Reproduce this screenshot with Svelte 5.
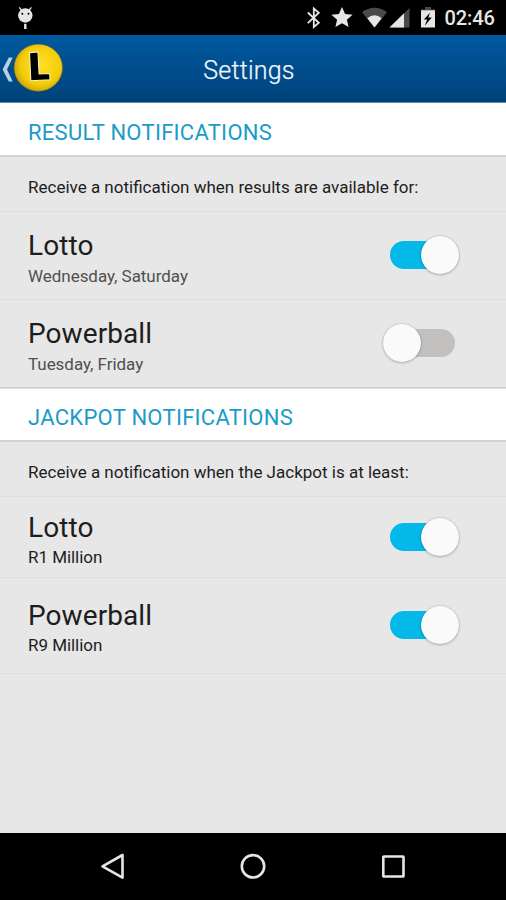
<script>
  const sections = $state([
    {
      title: 'RESULT NOTIFICATIONS',
      intro: 'Receive a notification when results are available for:',
      kind: 'result',
      rows: [
        { name: 'Lotto', detail: 'Wednesday, Saturday', on: true },
        { name: 'Powerball', detail: 'Tuesday, Friday', on: false }
      ]
    },
    {
      title: 'JACKPOT NOTIFICATIONS',
      intro: 'Receive a notification when the Jackpot is at least:',
      kind: 'jackpot',
      rows: [
        { name: 'Lotto', detail: 'R1 Million', on: true },
        { name: 'Powerball', detail: 'R9 Million', on: true }
      ]
    }
  ]);
</script>

<div class="screen">
  <div class="status">
    <svg class="debug" width="16" height="24" viewBox="0 0 16 24">
      <path d="M2.300 1.300 4.600 4.500M14.300 1.300 12 4.500" stroke="#e6e6e6" stroke-width="1.300" />
      <circle cx="8.300" cy="9.500" r="7.200" fill="#e6e6e6" />
      <path d="M8.300 17.800v5.200" stroke="#e6e6e6" stroke-width="2.400" />
      <circle cx="5.300" cy="7.700" r="1" /><circle cx="11.500" cy="7.700" r="1" />
    </svg>
    <svg class="indicators" width="130" height="24" viewBox="305 6 130 24">
      <path d="m307.800 12.500 11 10.300-5 4.200V8.500l5 4.200-11 10.500" fill="none" stroke="#e6e6e6" stroke-width="1.800" />
      <path d="m342 7 3.100 7 7.500.7-5.700 5 1.700 7.400-6.600-3.900-6.600 3.900 1.700-7.400-5.700-5 7.500-.7z" fill="#e6e6e6" />
      <path d="M362 12.300c7.500-6 17.500-6 25 0L374.500 27.500z" fill="#4a4a4a" />
      <path d="M367.300 18.300q7.200-6 14.400 0L374.500 27.500z" fill="#e6e6e6" />
      <path d="M389.500 27.500 409.500 8v19.500z" fill="#4a4a4a" />
      <path d="M389.500 27.500 404 13.200v14.300z" fill="#e6e6e6" />
      <path d="M425 7h6v2.500h4V12h-14V9.500h4z" fill="#4a4a4a" />
      <path d="M421 10.300h14v17.200h-14z" fill="#e6e6e6" />
      <path d="m430 12.800-6.200 6.700h3.300l-2.300 6.200 7-8.200h-3.500z" fill="#000" />
    </svg>
    <span class="clock">02:46</span>
  </div>

  <header>
    <svg class="home" width="64" height="67" viewBox="0 0 64 67">
      <defs>
        <radialGradient id="ball" cx="55%" cy="45%" r="58%">
          <stop offset="0" stop-color="#ffdf24" />
          <stop offset=".7" stop-color="#f3cd0c" />
          <stop offset="1" stop-color="#cda500" />
        </radialGradient>
      </defs>
      <path d="M8.800 22.500h3.900L7 34.500l5.700 12H8.800L2.600 34.500z" fill="#b9cfe3" />
      <ellipse cx="38.300" cy="32.700" rx="24.200" ry="23.500" fill="url(#ball)" stroke="#86720b" stroke-width=".5" />
      <path d="m29.500 17.600 8.500-.6 1.100 22 10.700-.5.200 6.300-19.200 1z" fill="#000" stroke="#fff4b0" stroke-width="1.100" stroke-linejoin="round" />
    </svg>
    <h1>Settings</h1>
  </header>

  <main>
    {#each sections as section}
      <section class={section.kind}>
        <h2>{section.title}</h2>
        <p class="intro">{section.intro}</p>
        {#each section.rows as row}
          <div class="row">
            <div class="label">
              <div class="name">{row.name}</div>
              <div class="detail">{row.detail}</div>
            </div>
            <button
              class="switch"
              class:on={row.on}
              role="switch"
              aria-checked={row.on}
              aria-label={row.name}
              onclick={() => (row.on = !row.on)}
            ><span class="thumb"></span></button>
          </div>
        {/each}
      </section>
    {/each}
  </main>

  <nav>
    <svg width="26" height="30" viewBox="0 0 26 30"><path d="M22.500 3v22.600L2.500 14.300z" fill="none" stroke="#e6e6e6" stroke-width="2.600" stroke-linejoin="round" /></svg>
    <svg width="26" height="30" viewBox="0 0 26 30"><circle cx="13" cy="14.300" r="11.200" fill="none" stroke="#e6e6e6" stroke-width="2.600" /></svg>
    <svg width="26" height="30" viewBox="0 0 26 30"><rect x="3.300" y="4.500" width="20.200" height="20" rx=".6" fill="none" stroke="#e6e6e6" stroke-width="2.600" /></svg>
  </nav>
</div>

<style>
  .screen {
    width: 506px;
    height: 900px;
    display: flex;
    flex-direction: column;
    overflow: hidden;
    background: #e7e7e7;
    font-family: Roboto, "Liberation Sans", sans-serif;
    color: #1d1d1d;
  }
  h1, h2, p { margin: 0; font-weight: 400; }
  .status {
    height: 35px;
    flex: none;
    box-sizing: border-box;
    display: flex;
    align-items: flex-start;
    padding: 6px 11px 0 17px;
    background: #000;
  }
  .indicators { margin-left: auto; overflow: visible; }
  .clock {
    margin-left: 9.500px;
    width: 50.500px;
    white-space: nowrap;
    font-size: 20px;
    font-weight: 500;
    line-height: 25px;
    letter-spacing: -.1px;
    color: #e6e6e6;
  }
  header {
    height: 68px;
    flex: none;
    box-sizing: border-box;
    display: flex;
    background: linear-gradient(#0059a1, #00427a);
    border-bottom: 1px solid #6a86a3;
  }
  h1 {
    width: 370px;
    text-align: center;
    font-size: 25px;
    line-height: 72px;
    letter-spacing: .2px;
    color: #f2f6fa;
    font-weight: 300;
    -webkit-text-stroke: .25px #f2f6fa;
  }
  main { flex: 1; }
  h2 {
    box-sizing: border-box;
    height: 54px;
    padding: 15px 28px 0;
    background: #fff;
    border-bottom: 2px solid #d3d3d3;
    font-size: 22px;
    line-height: 30px;
    letter-spacing: .28px;
    color: #1a9bc8;
  }
  .jackpot h2 { border-top: 1px solid #dedede; padding-top: 14px; }
  .intro {
    box-sizing: border-box;
    height: 55px;
    padding: 18px 28px 0;
    border-bottom: 1px solid #dfdfdf;
    font-size: 17px;
    line-height: 24px;
  }
  .row {
    box-sizing: border-box;
    height: 88px;
    display: flex;
    justify-content: space-between;
    padding: 18px 47px 0 28px;
    border-bottom: 1px solid #dfdfdf;
  }
  .result .row:last-child { border-color: #cecece; }
  .jackpot .row { height: 81px; padding-top: 14px; }
  .jackpot .row:last-child { height: 96px; padding-top: 21px; }
  .name { margin-top: 1px; font-size: 28px; line-height: 32px; letter-spacing: .08px; }
  .detail { margin-top: 1px; font-size: 17px; line-height: 24px; letter-spacing: -.04px; color: #505050; }
  .jackpot .detail { color: #1d1d1d; }
  .switch {
    position: relative;
    display: flex;
    align-items: center;
    width: 76px;
    height: 38px;
    margin: 6.500px 0 0;
    padding: 0;
    border: 0;
    background: none;
  }
  .switch::before {
    content: "";
    position: absolute;
    left: 7px;
    top: 5px;
    width: 65px;
    height: 28px;
    border-radius: 14px;
    background: #c2c1c0;
  }
  .switch.on::before { background: #05b8ea; }
  .thumb {
    position: relative;
    width: 38px;
    height: 38px;
    border-radius: 50%;
    background: #fafafa;
    box-shadow: 0 0 1px 0.500px #00000020, 0 1px 3px #00000038;
  }
  .switch.on .thumb { margin-left: auto; }
  .result .name { margin-top: 0; }
  .result .detail { margin-top: 2px; }
  .result .row { padding-top: 17.800px; }
  nav {
    height: 67px;
    flex: none;
    display: flex;
    align-items: center;
    justify-content: space-between;
    padding: 0 100px;
    background: #000;
  }
</style>
